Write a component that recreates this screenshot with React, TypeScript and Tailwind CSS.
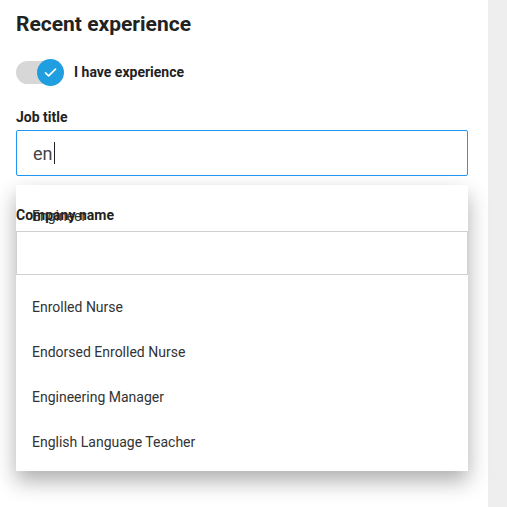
import React from 'react'

const options = [
  'Engineer',
  'Engineering Assistant',
  'Enrolled Nurse',
  'Endorsed Enrolled Nurse',
  'Engineering Manager',
  'English Language Teacher',
]

export default function App() {
  return (
    <div
      className="flex h-[507px] w-[507px] overflow-hidden bg-white text-[#222]"
      style={{ fontFamily: 'Roboto, "Liberation Sans", sans-serif' }}
    >
      <main className="w-[488px] shrink-0 pl-4 pr-5 pt-[10px]">
        <h2 className="text-[21px] font-bold leading-[29px]">Recent experience</h2>

        {/* toggle */}
        <div className="mt-[20px] flex items-center">
          <div className="relative flex h-[27px] w-[48px] items-center">
            <div className="h-[23px] w-[44px] rounded-full bg-[#d7d7d7]" />
            <div className="absolute left-[21px] top-0 flex h-[27px] w-[27px] items-center justify-center rounded-full bg-[#1f9fe0]">
              <svg width="15" height="15" viewBox="0 0 24 24" fill="none" stroke="white" strokeWidth="2.6" strokeLinecap="round" strokeLinejoin="round">
                <path d="M4 12.5l5 5L20 6.5" />
              </svg>
            </div>
          </div>
          <span className="ml-[10px] text-[14px] font-bold">I have experience</span>
        </div>

        {/* job title */}
        <div className="relative mt-[22px]">
          <label className="block text-[14px] font-bold leading-[18px]">Job title</label>
          <div className="mt-1 flex h-[46px] items-center rounded-[2px] border border-[#2196f3] px-4">
            <span className="text-[18px] text-[#444]">en</span>
            <span className="ml-[1px] h-[22px] w-px bg-[#222]" />
          </div>

          {/* suggestions */}
          <ul className="absolute left-0 right-0 top-[77px] bg-white pb-[6px] pt-[9px] shadow-[0_10px_20px_rgba(0,0,0,0.32)]">
            {options.map((o, i) => (
              <li
                key={o}
                className={
                  i === 1
                    ? 'flex h-[46px] items-center px-4 text-[14px] text-[#333]'
                    : 'flex h-[45px] items-center px-4 text-[14px] text-[#333]'
                }
              >
                {o}
              </li>
            ))}
          </ul>
        </div>

        {/* company name */}
        <div className="relative mt-[30px]">
          <label className="block text-[14px] font-bold leading-[18px]">Company name</label>
          <div className="mt-[7px] h-[44px] border border-[#d0d0d0] bg-white" />
        </div>
      </main>
      <aside className="flex-1 bg-[#eeeeee]" />
    </div>
  )
}
